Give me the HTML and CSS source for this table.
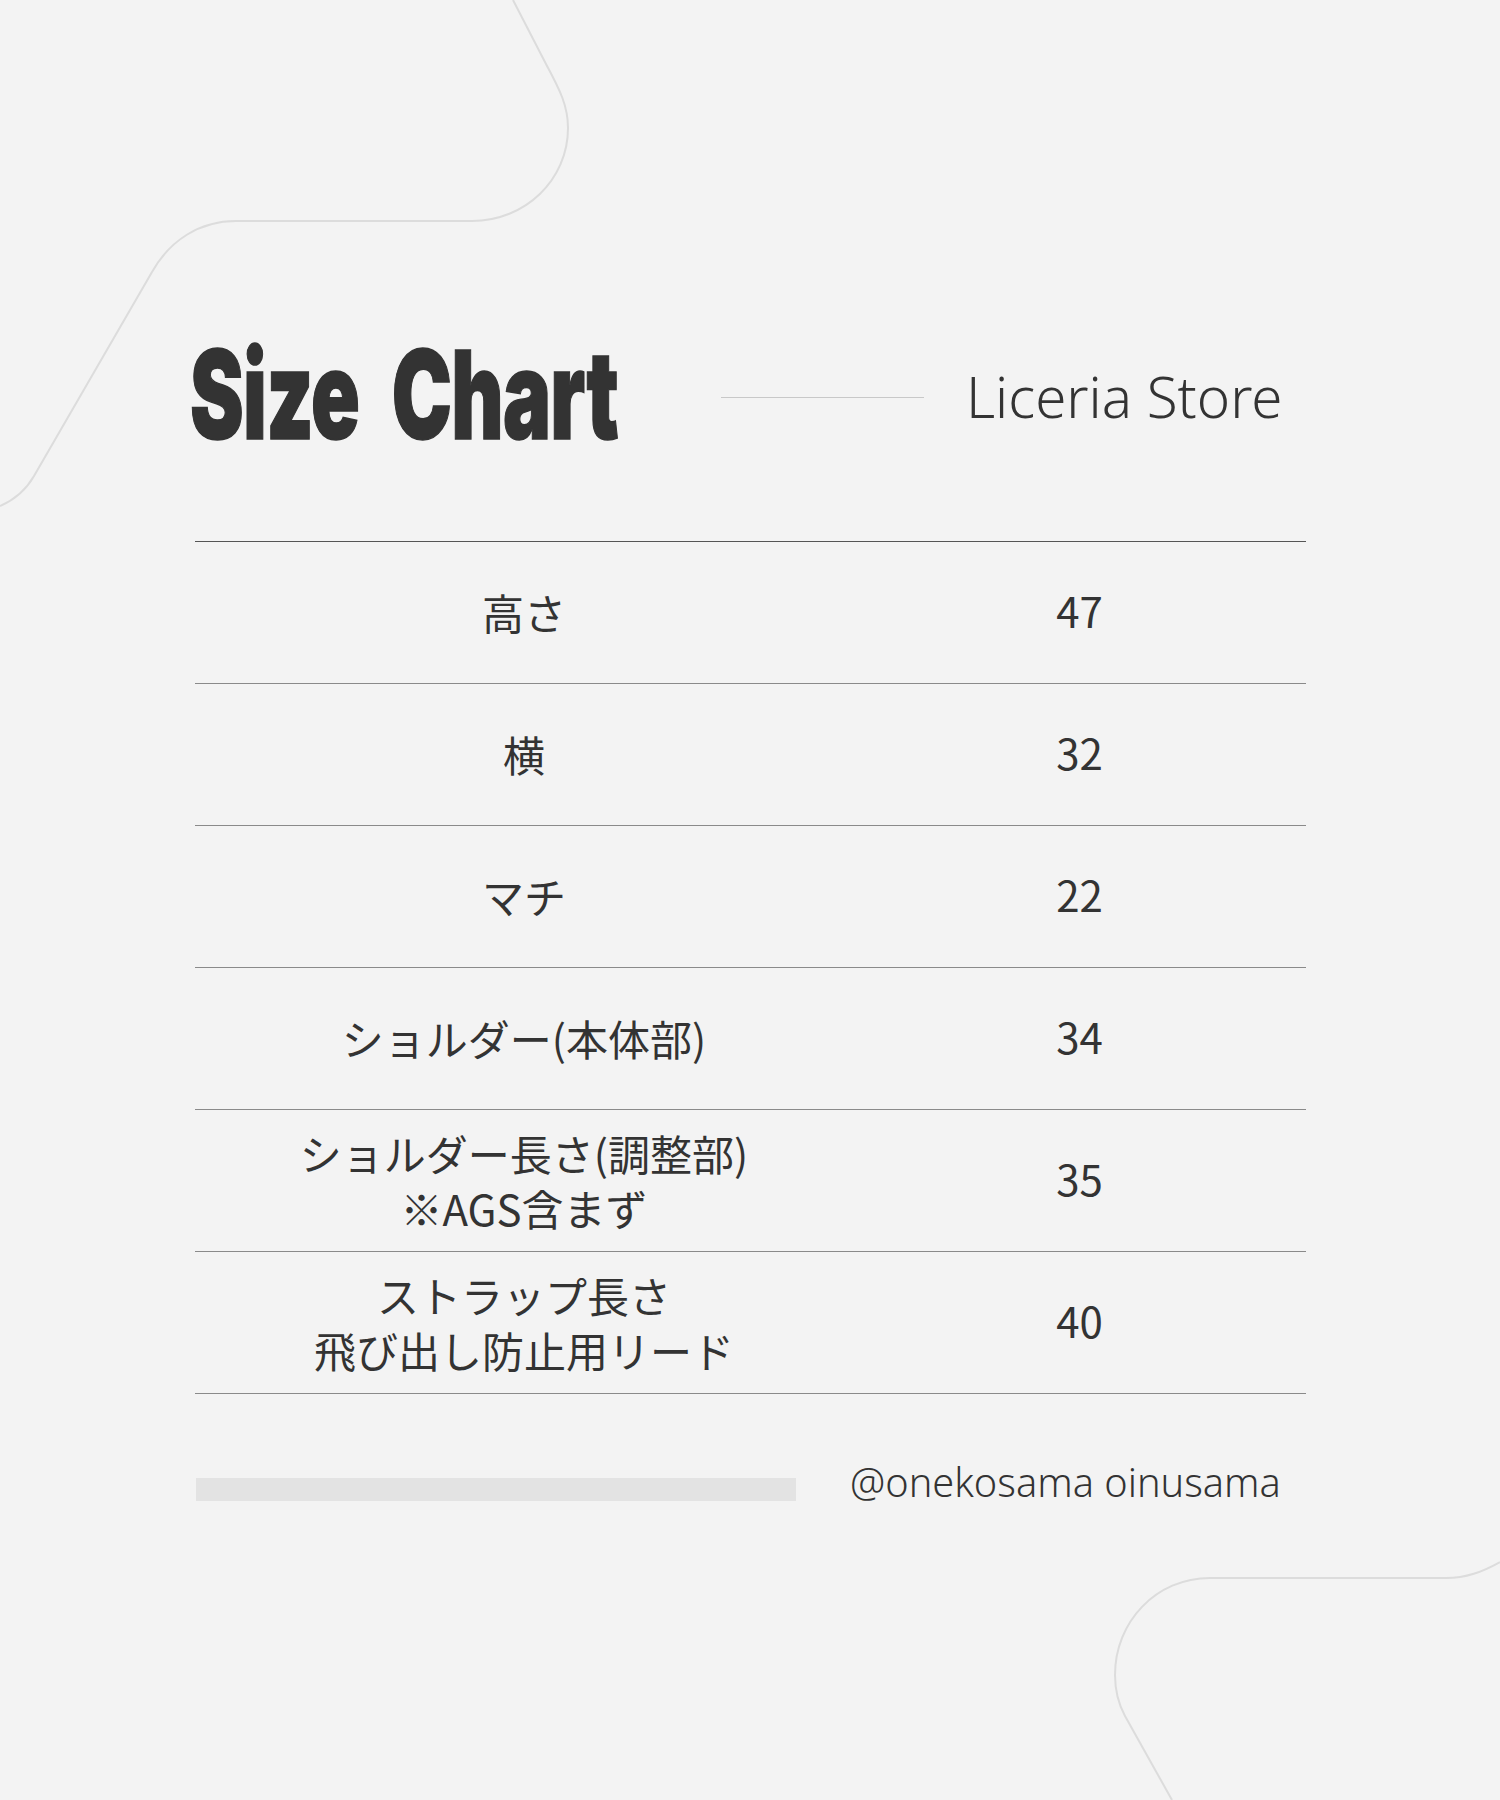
FILE: index.html
```html
<!DOCTYPE html>
<html lang="ja">
<head>
<meta charset="utf-8">
<title>Size Chart - Liceria Store</title>
<link rel="stylesheet" href="styles.css">
</head>
<body>
<div class="page">
  <svg class="bg" width="1500" height="1800" viewBox="0 0 1500 1800" aria-hidden="true">
    <path d="M513 0 L546 64 C560 90 568 106 568 128 C568 180 525 221 472 221 L236 221 C200 221 170 240 152 272 L34 476 C26 490 14 500 0 506" />
    <path d="M1500 1562 C1482 1572 1466 1578 1446 1578 L1210 1578 C1156 1578 1115 1622 1115 1675 C1115 1690 1118 1703 1125 1716 L1172 1800" />
  </svg>
  <main class="sheet">
    <header class="head">
      <div class="title-box"><h1 class="title">Size Chart</h1></div>
      <span class="rule"></span>
      <p class="store">Liceria Store</p>
    </header>
    <section class="table">
      <div class="row"><div class="label">高さ</div><div class="value">47</div></div>
      <div class="row"><div class="label">横</div><div class="value">32</div></div>
      <div class="row"><div class="label">マチ</div><div class="value">22</div></div>
      <div class="row"><div class="label">ショルダー(本体部)</div><div class="value">34</div></div>
      <div class="row"><div class="label">ショルダー長さ(調整部)<br>※AGS含まず</div><div class="value">35</div></div>
      <div class="row"><div class="label">ストラップ長さ<br>飛び出し防止用リード</div><div class="value">40</div></div>
    </section>
    <footer class="foot">
      <span class="bar"></span>
      <p class="handle">@onekosama oinusama</p>
    </footer>
  </main>
</div>
</body>
</html>
```

FILE: styles.css
```css
html, body {
  margin: 0;
  padding: 0;
}
body {
  background: #f3f3f3;
  color: #333333;
  font-family: "Noto Sans CJK JP", "Noto Sans", sans-serif;
}
.page {
  position: relative;
  width: 1500px;
  height: 1800px;
  overflow: hidden;
  background: #f3f3f3;
}
.bg {
  position: absolute;
  left: 0;
  top: 0;
}
.bg path {
  fill: none;
  stroke: #dcdcdc;
  stroke-width: 2;
}
.sheet {
  position: relative;
  padding: 322px 194px 0 195px;
}
.head {
  display: flex;
  align-items: center;
  height: 150px;
  margin-left: -5px;
}
.title-box {
  width: 531px;
  flex: none;
  padding-bottom: 6px;
}
.title {
  margin: 0;
  display: inline-block;
  font-family: "Inter", "Roboto", sans-serif;
  font-weight: 900;
  font-size: 123px;
  line-height: 1;
  letter-spacing: -1px;
  word-spacing: 26px;
  color: #333333;
  -webkit-text-stroke: 1.5px #333333;
  transform: scaleX(0.655);
  transform-origin: left center;
  white-space: nowrap;
}
.rule {
  flex: none;
  width: 203px;
  height: 1px;
  background: #c8c8c8;
}
.store {
  margin: 0 0 0 42px;
  font-family: "Noto Sans", "Open Sans", sans-serif;
  font-weight: 300;
  font-size: 56.5px;
  line-height: 1;
  color: #333333;
  white-space: nowrap;
}
.table {
  margin-top: 69px;
  border-top: 1px solid #555555;
}
.row {
  display: grid;
  grid-template-columns: 658px 1fr;
  align-items: center;
  height: 142px;
  box-sizing: border-box;
  border-bottom: 1.5px solid #8a8a8a;
  font-size: 42px;
  line-height: 55px;
  text-align: center;
  color: #333333;
}
.label {
  padding-bottom: 2px;
}
.value {
  padding-bottom: 6px;
}
.foot {
  display: flex;
  align-items: center;
  margin-top: 76px;
}
.bar {
  flex: none;
  width: 600px;
  height: 23px;
  margin-left: 1px;
  background: #e3e3e3;
}
.handle {
  margin: 0 0 0 54px;
  font-family: "Noto Sans", "Open Sans", sans-serif;
  font-weight: 300;
  font-size: 39.7px;
  line-height: 1;
  color: #333333;
  white-space: nowrap;
  position: relative;
  top: -7px;
}
```
